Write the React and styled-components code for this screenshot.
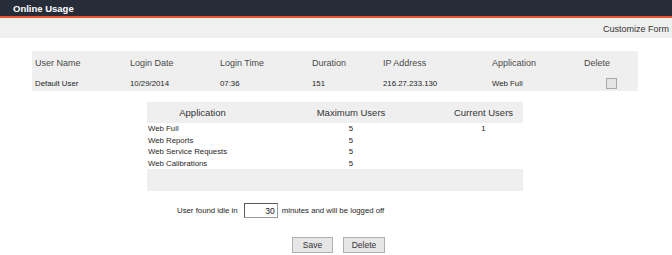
import React from 'react'
import styled, { createGlobalStyle } from 'styled-components'

const GlobalStyle = createGlobalStyle`
  body {
    margin: 0;
    background: #ffffff;
    font-family: "Liberation Sans", Arial, sans-serif;
  }
`;

const Page = styled.div`
  width: 672px;
  height: 255px;
  overflow: hidden;
`;

const TitleBar = styled.div`
  height: 16px;
  line-height: 17px;
  padding-left: 13px;
  background: #272c39;
  border-bottom: 2px solid #e4572e;
  color: #ffffff;
  font-size: 9.5px;
  font-weight: bold;
`;

const SubBar = styled.div`
  height: 20px;
  line-height: 22px;
  padding-right: 3px;
  background: #f0f0f0;
  text-align: right;
  font-size: 9px;
  color: #333;
`;

const UsersTable = styled.div`
  margin: 13px 0 0 32px;
  width: 606px;
  background: #efefef;
  display: grid;
  grid-template-columns: 95px 90px 92px 71px 109px 92px 57px;
`;

const HeadCell = styled.div`
  height: 24px;
  line-height: 25px;
  padding-left: 3px;
  font-size: 9px;
  color: #4a4a4a;
`;

const DataCell = styled.div`
  height: 16px;
  display: flex;
  align-items: center;
  padding-left: 3px;
  font-size: 7.8px;
  color: #1e1e1e;
`;

const Check = styled.span`
  display: inline-block;
  width: 9px;
  height: 9px;
  margin-left: 22px;
  background: #e4e4e4;
  border: 1px solid #a8a8a8;
`;

const AppsTable = styled.div`
  margin: 11px 0 0 147px;
  width: 376px;
  display: grid;
  grid-template-columns: 111px 186px 79px;
`;

const AppHead = styled.div`
  height: 21px;
  line-height: 22px;
  background: #efefef;
  text-align: center;
  font-size: 9.5px;
  color: #333;
`;

const AppCell = styled.div`
  height: 11.5px;
  line-height: 11.5px;
  font-size: 7.8px;
  color: #1e1e1e;
  padding-left: ${p => (p.$left ? '1px' : '0')};
  text-align: ${p => (p.$left ? 'left' : 'center')};
`;

const AppFooter = styled.div`
  grid-column: 1 / -1;
  height: 22px;
  background: #efefef;
`;

const IdleRow = styled.div`
  margin: 12px 0 0 177px;
  height: 15px;
  display: flex;
  align-items: center;
  font-size: 7.8px;
  color: #1e1e1e;
`;

const IdleInput = styled.div`
  box-sizing: border-box;
  width: 34px;
  height: 15px;
  margin: 0 4px 0 6px;
  padding-right: 2px;
  border: 1px solid #9a9a9a;
  border-top-color: #5a5a5a;
  border-left-color: #5a5a5a;
  background: #fff;
  text-align: right;
  line-height: 14px;
  font-size: 8.5px;
  color: #111;
`;

const Buttons = styled.div`
  margin: 19px 0 0 292px;
  display: flex;
  gap: 10px;
`;

const Button = styled.button`
  box-sizing: border-box;
  width: ${p => p.$w}px;
  height: 16px;
  padding: 0;
  background: #e6e6e6;
  border: 1px solid #b0b0b0;
  font-family: "Liberation Sans", Arial, sans-serif;
  font-size: 8.5px;
  color: #333;
`;

const users = [
  ['User Name', 'Default User'],
  ['Login Date', '10/29/2014'],
  ['Login Time', '07:36'],
  ['Duration', '151'],
  ['IP Address', '216.27.233.130'],
  ['Application', 'Web Full'],
];

const apps = [
  ['Web Full', '5', '1'],
  ['Web Reports', '5', ''],
  ['Web Service Requests', '5', ''],
  ['Web Calibrations', '5', ''],
];

export default function App() {
  return (
    <Page>
      <GlobalStyle />
      <TitleBar>Online Usage</TitleBar>
      <SubBar>Customize Form</SubBar>

      <UsersTable>
        {users.map(([h]) => <HeadCell key={h}>{h}</HeadCell>)}
        <HeadCell>Delete</HeadCell>
        {users.map(([h, v]) => <DataCell key={h}>{v}</DataCell>)}
        <DataCell><Check /></DataCell>
      </UsersTable>

      <AppsTable>
        <AppHead>Application</AppHead>
        <AppHead>Maximum Users</AppHead>
        <AppHead>Current Users</AppHead>
        {apps.map(([name, max, cur]) => (
          <React.Fragment key={name}>
            <AppCell $left>{name}</AppCell>
            <AppCell>{max}</AppCell>
            <AppCell>{cur}</AppCell>
          </React.Fragment>
        ))}
        <AppFooter />
      </AppsTable>

      <IdleRow>
        User found idle in
        <IdleInput>30</IdleInput>
        minutes and will be logged off
      </IdleRow>

      <Buttons>
        <Button $w={41}>Save</Button>
        <Button $w={42}>Delete</Button>
      </Buttons>
    </Page>
  )
}
